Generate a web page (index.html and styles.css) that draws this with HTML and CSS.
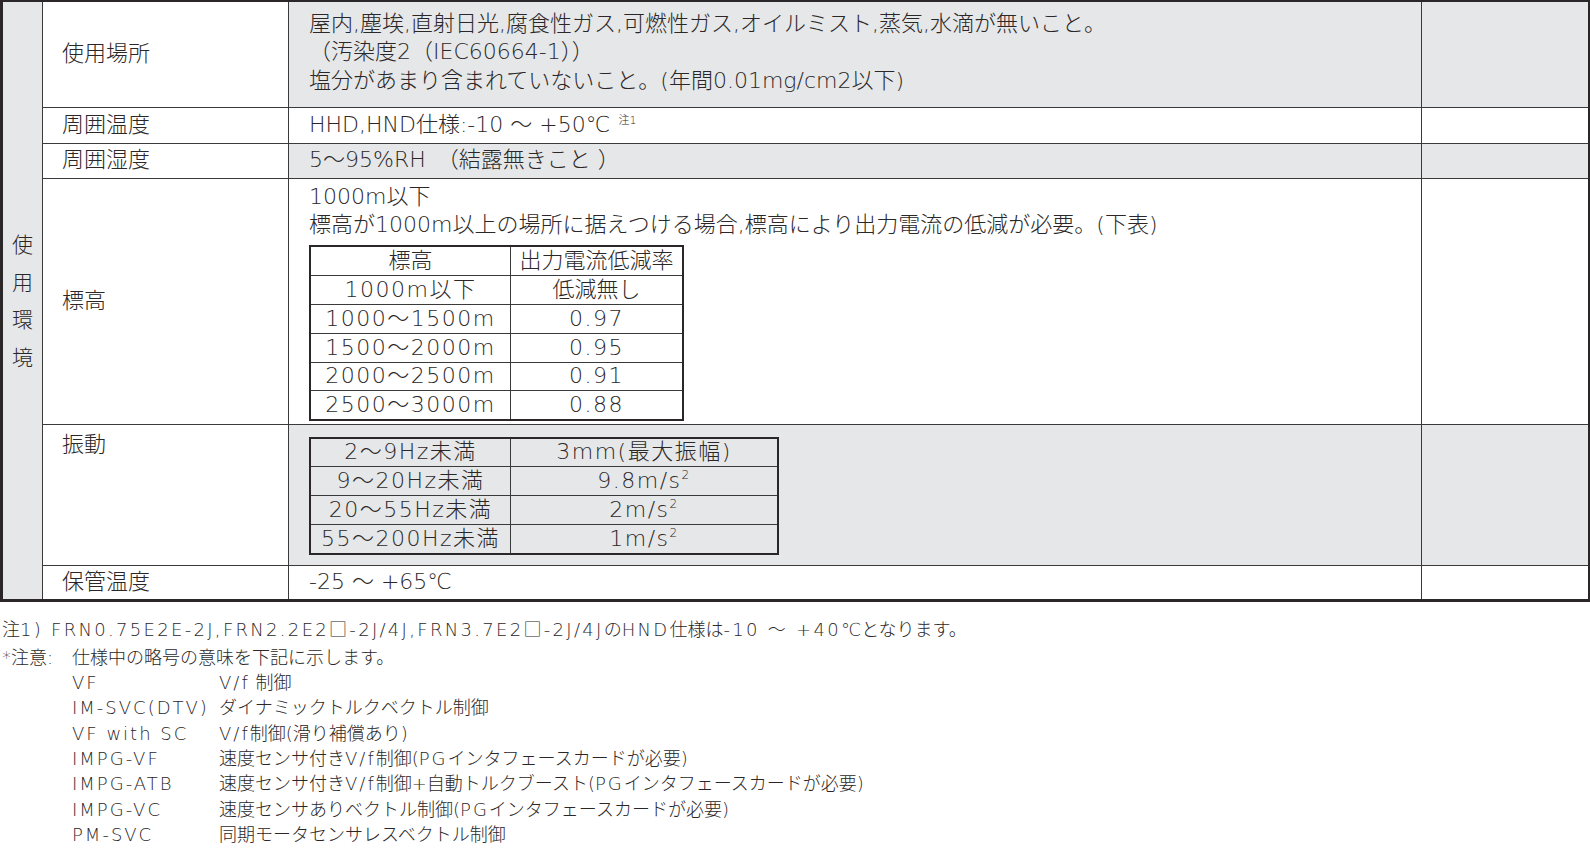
FILE: index.html
```html
<!DOCTYPE html>
<html lang="ja">
<head>
<meta charset="utf-8">
<title>使用環境</title>
<link rel="stylesheet" href="styles.css">
</head>
<body>
<table class="spec">
  <colgroup>
    <col class="c-cat">
    <col class="c-label">
    <col class="c-value">
    <col class="c-note">
  </colgroup>
  <tr class="r-place">
    <th class="cat" rowspan="6"><div class="cat-text">使<br>用<br>環<br>境</div></th>
    <td class="label">使用場所</td>
    <td class="value shade top pad-place">屋内,塵埃,直射日光,腐食性ガス,可燃性ガス,オイルミスト,蒸気,水滴が無いこと。<br>（汚染度2（IEC60664-1））<br>塩分があまり含まれていないこと。(年間0.01mg/cm2以下)</td>
    <td class="note shade"></td>
  </tr>
  <tr class="r-temp">
    <td class="label">周囲温度</td>
    <td class="value">HHD,HND仕様:-10 ～ +50℃<sup class="ref">注1</sup></td>
    <td class="note"></td>
  </tr>
  <tr class="r-hum">
    <td class="label">周囲湿度</td>
    <td class="value shade">5～95%RH　（結露無きこと ）</td>
    <td class="note shade"></td>
  </tr>
  <tr class="r-alt">
    <td class="label">標高</td>
    <td class="value top pad-alt">1000m以下<br>標高が1000m以上の場所に据えつける場合,標高により出力電流の低減が必要。(下表)
      <table class="inner alt-table">
        <tr><td>標高</td><td>出力電流低減率</td></tr>
        <tr><td>1000m以下</td><td>低減無し</td></tr>
        <tr><td>1000～1500m</td><td>0.97</td></tr>
        <tr><td>1500～2000m</td><td>0.95</td></tr>
        <tr><td>2000～2500m</td><td>0.91</td></tr>
        <tr><td>2500～3000m</td><td>0.88</td></tr>
      </table>
    </td>
    <td class="note"></td>
  </tr>
  <tr class="r-vib">
    <td class="label top pad-vib">振動</td>
    <td class="value shade top pad-vibval">
      <table class="inner vib-table">
        <tr><td>2～9Hz未満</td><td>3mm(最大振幅)</td></tr>
        <tr><td>9～20Hz未満</td><td>9.8m/s<sup>2</sup></td></tr>
        <tr><td>20～55Hz未満</td><td>2m/s<sup>2</sup></td></tr>
        <tr><td>55～200Hz未満</td><td>1m/s<sup>2</sup></td></tr>
      </table>
    </td>
    <td class="note shade"></td>
  </tr>
  <tr class="r-store">
    <td class="label">保管温度</td>
    <td class="value">-25 ～ +65℃</td>
    <td class="note"></td>
  </tr>
</table>

<div class="notes">
  <p class="note1">注<span class="en">1) FRN0.75E2E-2J,FRN2.2E2□-2J/4J,FRN3.7E2□-2J/4J</span>の<span class="en">HND</span>仕様は<span class="en">-10 ～ +40</span>℃となります。</p>
  <div class="caution">
    <span class="caution-head">*注意:</span>
    <span>仕様中の略号の意味を下記に示します。</span>
  </div>
  <dl class="abbr">
    <dt>VF</dt><dd><span class="en">V/f</span> 制御</dd>
    <dt>IM-SVC(DTV)</dt><dd>ダイナミックトルクベクトル制御</dd>
    <dt>VF with SC</dt><dd><span class="en">V/f</span>制御(滑り補償あり)</dd>
    <dt>IMPG-VF</dt><dd>速度センサ付き<span class="en">V/f</span>制御(<span class="en">PG</span>インタフェースカードが必要)</dd>
    <dt>IMPG-ATB</dt><dd>速度センサ付き<span class="en">V/f</span>制御+自動トルクブースト(<span class="en">PG</span>インタフェースカードが必要)</dd>
    <dt>IMPG-VC</dt><dd>速度センサありベクトル制御(<span class="en">PG</span>インタフェースカードが必要)</dd>
    <dt>PM-SVC</dt><dd>同期モータセンサレスベクトル制御</dd>
  </dl>
</div>
</body>
</html>
```

FILE: styles.css
```css
html, body {
  margin: 0;
  padding: 0;
  background: #ffffff;
}

body {
  font-family: "DejaVu Sans", "Noto Sans CJK JP", sans-serif;
  font-weight: 300;
  color: #2b2728;
}

.spec {
  border-collapse: collapse;
  table-layout: fixed;
  width: 1589px;
  border-top: 2px solid #2b2728;
  border-left: 3px solid #2b2728;
  border-right: 2px solid #2b2728;
  border-bottom: 3px solid #2b2728;
  font-size: 22px;
  line-height: 28.4px;
}

.c-cat { width: 41px; }
.c-label { width: 246px; }
.c-value { width: 1133px; }
.c-note { width: 167px; }

.spec > tbody > tr > td,
.spec > tbody > tr > th {
  border: 1px solid #3a3a3a;
  padding: 0;
  vertical-align: middle;
  text-align: left;
}

.r-place { height: 106px; }
.r-temp { height: 36px; }
.r-hum { height: 35px; }
.r-alt { height: 246px; }
.r-vib { height: 141px; }
.r-store { height: 35px; }

.cat {
  background: #e6e7e8;
  font-weight: 300;
}

.cat-text {
  text-align: center;
  line-height: 37.6px;
  font-size: 21px;
  padding-top: 4px;
}

.label {
  padding-left: 19px !important;
  white-space: nowrap;
}

.value {
  padding-left: 20px !important;
  white-space: nowrap;
}

.shade {
  background: #e6e7e8;
}

.top {
  vertical-align: top !important;
}

.pad-place { padding-top: 8px !important; }
.pad-alt { padding-top: 4px !important; }
.pad-vib { padding-top: 6px !important; }
.pad-vibval { padding-top: 12px !important; }

.ref {
  font-size: 11px;
  vertical-align: 8px;
  line-height: 0;
  margin-left: 8px;
}

.inner {
  border-collapse: collapse;
  table-layout: fixed;
  border: 2px solid #2b2728;
  font-size: 22px;
  line-height: 1;
}

.inner td {
  border: 1px solid #3a3a3a;
  height: 27.8px;
  padding: 0;
  text-align: center;
  vertical-align: middle;
  white-space: nowrap;
}

.inner sup {
  font-size: 12px;
  vertical-align: 9px;
  line-height: 0;
}

.alt-table {
  margin-top: 6px;
  width: 375px;
}

.alt-table td:first-child { width: 199px; }

.alt-table tr + tr td:first-child,
.alt-table tr + tr + tr td:last-child,
.vib-table td {
  letter-spacing: 1.5px;
}

.vib-table {
  width: 470px;
}

.vib-table td:first-child { width: 199px; }

.notes {
  padding-left: 2px;
  font-size: 18px;
  line-height: 25.3px;
  margin-top: 15px;
}

.en {
  letter-spacing: 2px;
}

.note1 {
  margin: 0 0 3px 0;
}

.note1 .en {
  letter-spacing: 2.3px;
}

.caution {
  display: grid;
  grid-template-columns: 70px 1fr;
}

.abbr {
  margin: 0 0 0 70px;
  display: grid;
  grid-template-columns: 147px 1fr;
}

.abbr dt {
  letter-spacing: 2px;
}

.abbr dt,
.abbr dd {
  margin: 0;
  white-space: nowrap;
}
```
